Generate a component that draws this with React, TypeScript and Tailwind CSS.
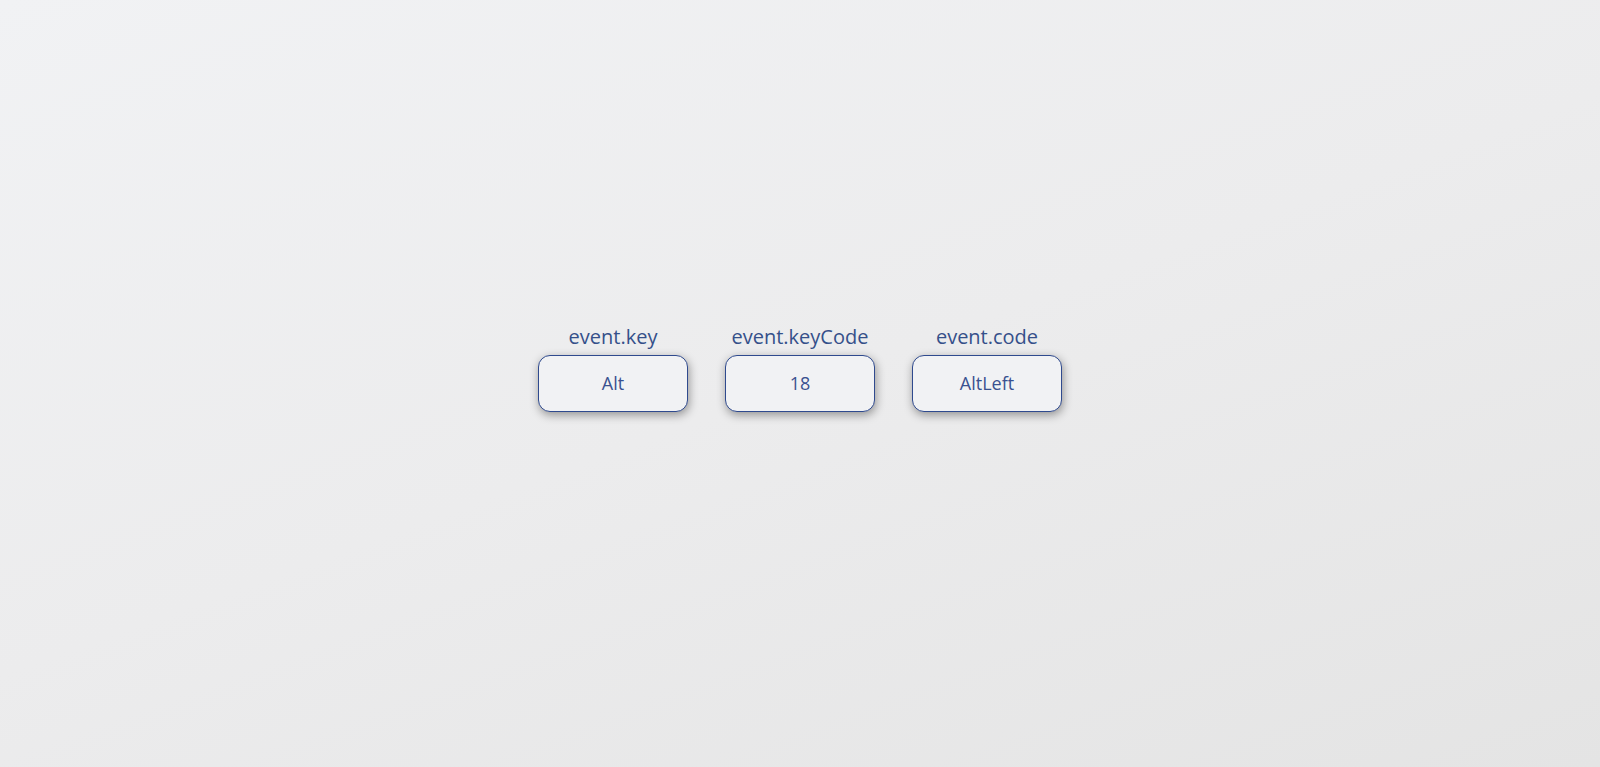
import React from "react";

const items = [
  { label: "event.key", value: "Alt" },
  { label: "event.keyCode", value: "18" },
  { label: "event.code", value: "AltLeft" },
];

export default function App() {
  return (
    <div
      className="w-full h-[767px] overflow-hidden bg-[linear-gradient(160deg,#f1f2f4_0%,#ececed_50%,#e4e4e4_100%)] flex justify-center pt-[323px]"
      style={{ fontFamily: '"Open Sans", "Noto Sans", sans-serif' }}
    >
      <div className="flex gap-[37px]">
        {items.map((it) => (
          <div key={it.label} className="flex flex-col items-center">
            <div className="text-[20px] leading-[28px] text-[#35508a] mb-[4px]">{it.label}</div>
            <div className="w-[150px] h-[57px] rounded-[12px] border border-[#2f4a8e] bg-[#f1f2f4] shadow-[1px_3px_10px_rgba(0,0,0,0.38)] flex items-center justify-center text-[18px] text-[#3a5190]">
              {it.value}
            </div>
          </div>
        ))}
      </div>
    </div>
  );
}
